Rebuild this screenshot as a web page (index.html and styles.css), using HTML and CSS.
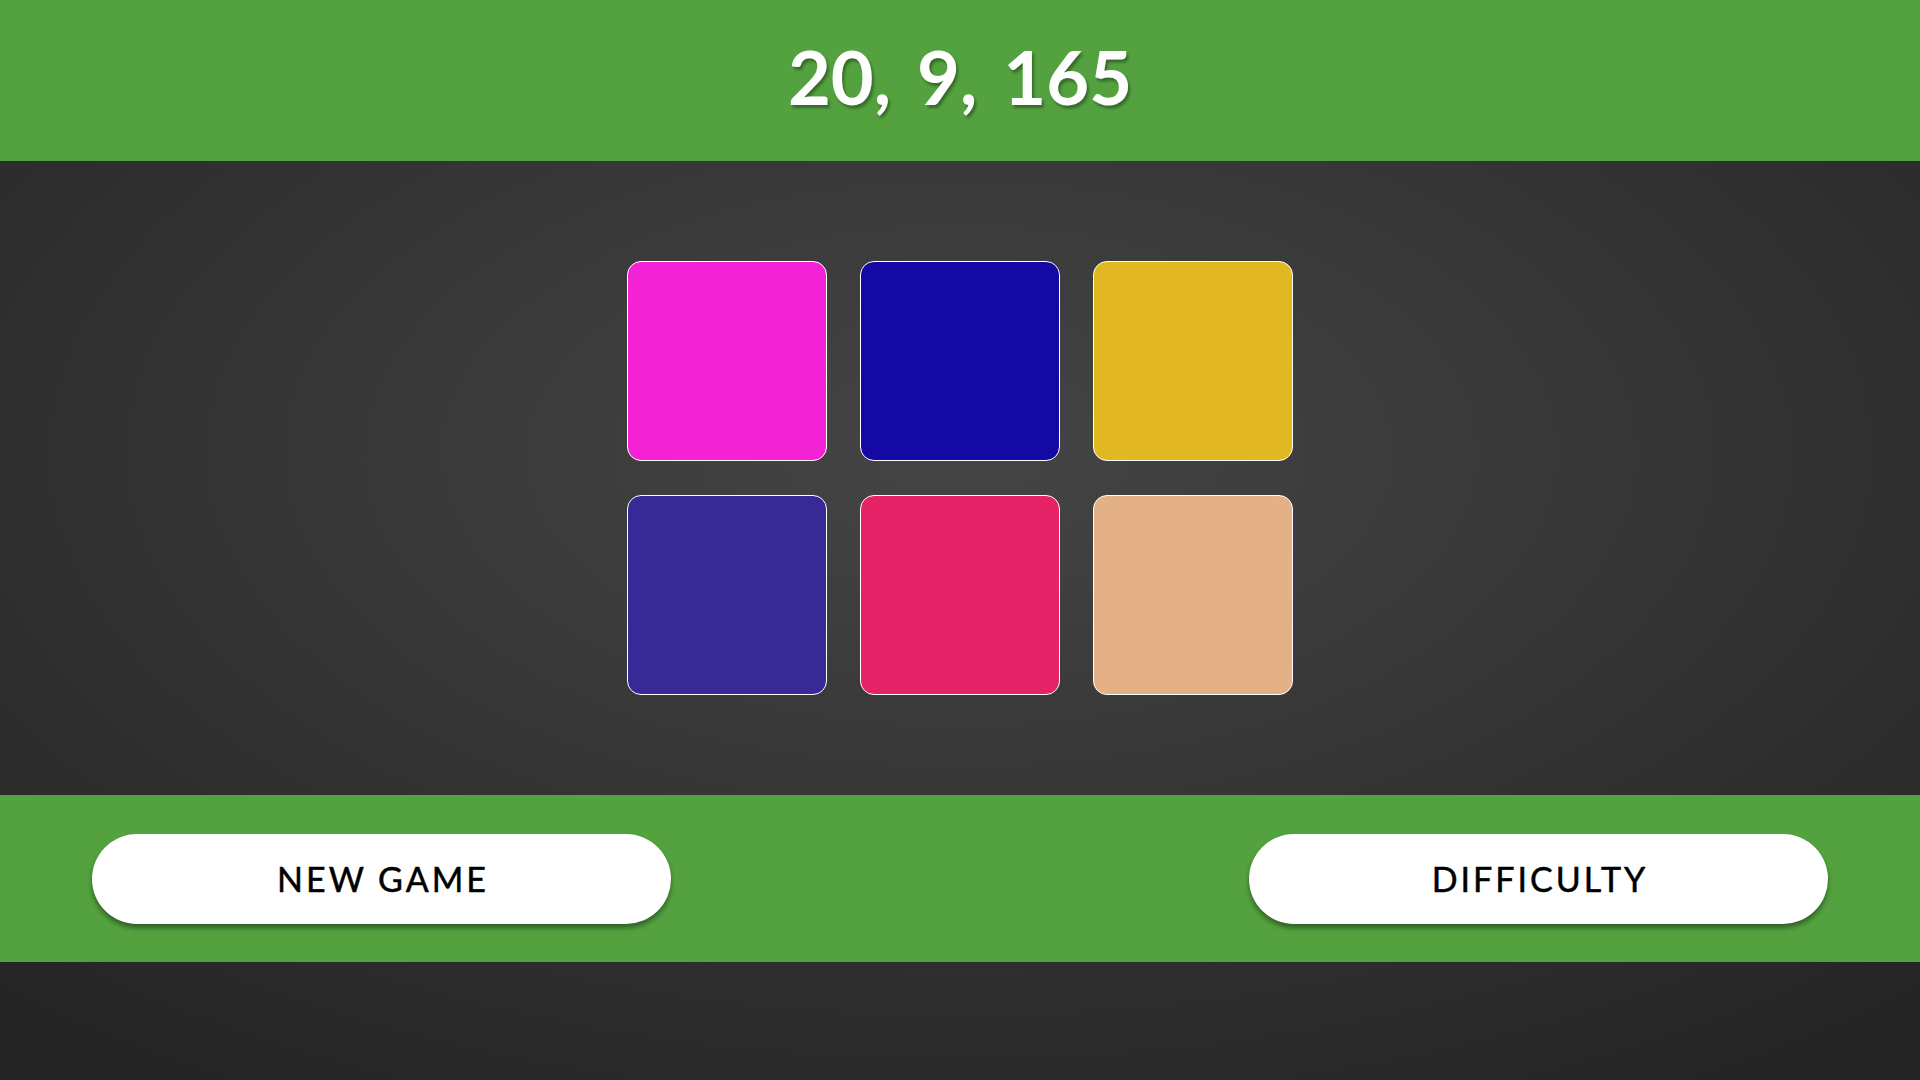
FILE: index.html
```html
<!DOCTYPE html>
<html>
<head>
<meta charset="utf-8">
<title>Color Game</title>
<link rel="stylesheet" href="styles.css">
</head>
<body>
  <header class="top-bar">
    <h1 class="target">20, 9, 165</h1>
  </header>
  <main class="board">
    <div class="grid">
      <div class="tile tile-pink"></div>
      <div class="tile tile-blue"></div>
      <div class="tile tile-yellow"></div>
      <div class="tile tile-purple"></div>
      <div class="tile tile-red"></div>
      <div class="tile tile-tan"></div>
    </div>
  </main>
  <footer class="controls">
    <button class="btn">NEW GAME</button>
    <button class="btn">DIFFICULTY</button>
  </footer>
</body>
</html>
```
FILE: styles.css
```css
html, body {
  margin: 0;
  padding: 0;
  height: 100%;
}
body {
  font-family: "Lato", "Inter", sans-serif;
  background: radial-gradient(ellipse 75% 70% at 50% 42%, #454545 0%, #3a3a3a 35%, #2e2e2e 70%, #242424 100%);
  background-color: #2a2a2a;
  min-height: 1080px;
}
.top-bar {
  background: #53a23f;
  height: 161px;
  display: flex;
  align-items: center;
  justify-content: center;
}
.target {
  margin: 0;
  color: #ffffff;
  font-family: "Lato", sans-serif;
  font-weight: 700;
  font-size: 74px;
  letter-spacing: 0;
  word-spacing: 8px;
  line-height: 1;
  text-shadow: 2px 3px 3px rgba(0, 0, 0, 0.35);
  padding-bottom: 8px;
}
.board {
  display: flex;
  justify-content: center;
  padding: 100px 0;
}
.grid {
  display: grid;
  grid-template-columns: repeat(3, 200px);
  grid-auto-rows: 200px;
  gap: 34px 33px;
}
.tile {
  box-sizing: border-box;
  border: 1.5px solid #ffffff;
  border-radius: 14px;
}
.tile-pink { background: #f322d4; }
.tile-blue { background: #1409a5; }
.tile-yellow { background: #e2b822; }
.tile-purple { background: #382a96; }
.tile-red { background: #e52265; }
.tile-tan { background: #e3b185; }
.controls {
  background: #53a23f;
  height: 167px;
  display: flex;
  align-items: center;
  justify-content: space-between;
  padding: 0 92px;
  box-sizing: border-box;
}
.btn {
  width: 579px;
  height: 90px;
  border: none;
  border-radius: 45px;
  background: #ffffff;
  color: #000000;
  font-family: "Lato", sans-serif;
  font-size: 34px;
  font-weight: 400;
  letter-spacing: 3px;
  -webkit-text-stroke: 0.5px #000000;
  box-shadow: 0 4px 5px rgba(0, 0, 0, 0.4);
  cursor: pointer;
  padding: 0 0 0 3px;
}
```
